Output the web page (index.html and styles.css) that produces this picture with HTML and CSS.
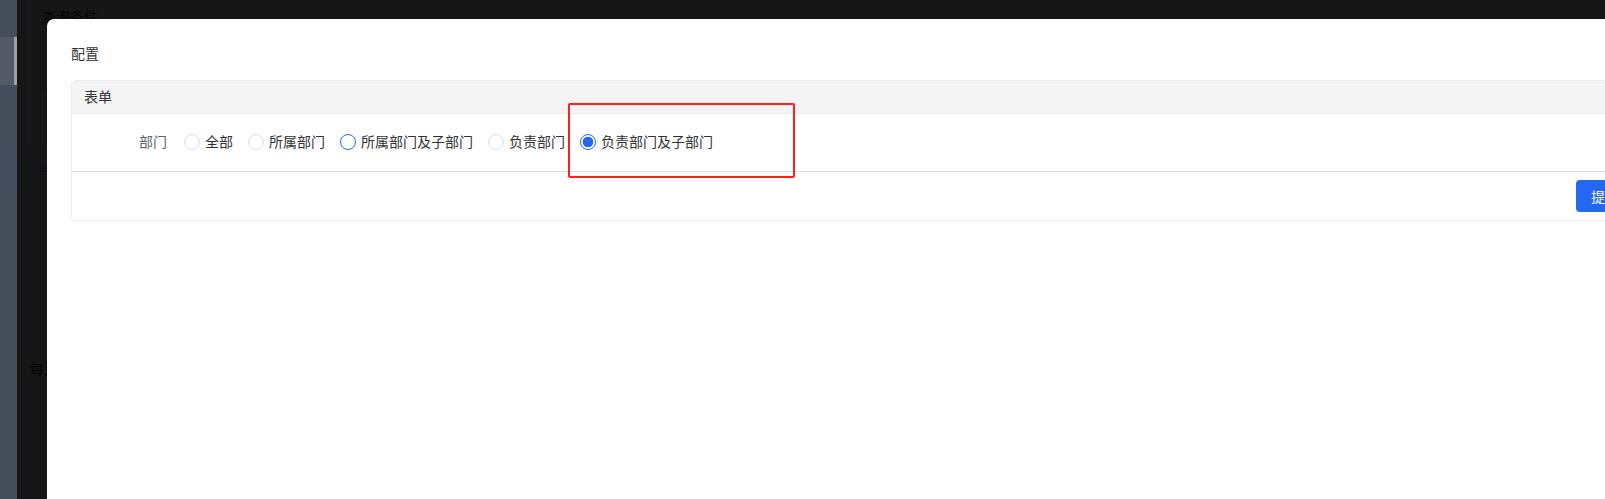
FILE: index.html
```html
<!DOCTYPE html>
<html lang="zh-CN">
<head>
<meta charset="utf-8">
<title>配置</title>
<link rel="stylesheet" href="styles.css">
</head>
<body>
<div class="app">
  <aside class="sidebar">
    <div class="side-top"></div>
    <div class="side-item active"></div>
    <div class="side-rest"></div>
  </aside>
  <main class="main">
    <div class="search-card">
      <div class="search-title">查询条件</div>
      <div class="search-box"></div>
    </div>
    <div class="filter-btn">
      <svg width="12" height="10" viewBox="0 0 12 10"><path d="M1 2h10M3 5h6M5 8h2" stroke="#0e131c" stroke-width="1.6" fill="none"/></svg>
    </div>
    <div class="pager-text">每页</div>
  </main>
</div>

<div class="modal">
  <div class="modal-title">配置</div>
  <div class="card">
    <div class="card-header">表单</div>
    <div class="card-body">
      <div class="form-row">
        <div class="form-label">部门</div>
        <div class="radio-group">
          <label class="radio"><span class="radio-circle"></span><span class="radio-text">全部</span></label>
          <label class="radio"><span class="radio-circle"></span><span class="radio-text">所属部门</span></label>
          <label class="radio"><span class="radio-circle hover"></span><span class="radio-text">所属部门及子部门</span></label>
          <label class="radio"><span class="radio-circle"></span><span class="radio-text">负责部门</span></label>
          <label class="radio"><span class="radio-circle checked"></span><span class="radio-text">负责部门及子部门</span></label>
        </div>
      </div>
    </div>
    <div class="card-footer">
      <button class="btn-primary">提交</button>
    </div>
  </div>
</div>

<div class="highlight"></div>
</body>
</html>
```

FILE: styles.css
```css
html, body {
  margin: 0;
  padding: 0;
  width: 1605px;
  height: 499px;
  overflow: hidden;
  background: #161616;
  font-family: "Noto Sans CJK SC", "Noto Sans", sans-serif;
  font-size: 14px;
}

.app {
  display: flex;
  height: 499px;
}

.sidebar {
  width: 17px;
  display: flex;
  flex-direction: column;
  background: #434d5b;
}

.side-top {
  height: 37px;
}

.side-item.active {
  height: 48px;
  background: #515a66;
  box-shadow: inset -3px 0 0 #9aa1a9;
}

.side-rest {
  flex: 1;
}

.main {
  flex: 1;
  padding: 0 0 0 12px;
  display: flex;
  flex-direction: column;
}

.search-card {
  height: 143px;
  border-left: 1px solid #1c1c1c;
  padding: 6px 0 0 12px;
  box-sizing: border-box;
}

.search-title {
  color: #050505;
  font-size: 14px;
  line-height: 20px;
}

.search-box {
  margin-top: 67px;
  height: 50px;
  border: 1px solid #1b1b1b;
  border-right: none;
}

.filter-btn {
  margin-top: 13px;
  width: 40px;
  height: 30px;
  border: 1px solid #0f1522;
  border-radius: 4px;
  box-sizing: border-box;
  display: flex;
  align-items: center;
  padding-left: 7px;
}

.pager-text {
  margin-top: 172px;
  margin-left: 1px;
  color: #050505;
  line-height: 20px;
}

/* modal */
.modal {
  position: absolute;
  left: 47px;
  top: 19px;
  width: 1624px;
  height: 480px;
  background: #ffffff;
  border-radius: 7px 7px 0 0;
  padding: 23px 24px 0;
  box-sizing: border-box;
}

.modal-title {
  color: #333333;
  font-size: 14px;
  line-height: 22px;
  margin-bottom: 16px;
}

.card {
  border: 1px solid #ebedf3;
  border-radius: 4px;
}

.card-header {
  height: 32px;
  line-height: 30px;
  padding: 0 12px 2px;
  box-sizing: border-box;
  background: #f4f4f5;
  border-bottom: 1px solid #ebedf3;
  color: #333333;
}

.card-header {
  height: 33px;
}

.card-body {
  padding: 16px 12px 17px;
}

.form-row {
  display: flex;
  align-items: center;
  height: 24px;
}

.form-label {
  width: 83px;
  text-align: right;
  color: #606266;
  margin-right: 17px;
  margin-bottom: 2px;
}

.radio-group {
  display: flex;
  align-items: center;
  gap: 15px;
}

.radio {
  display: flex;
  align-items: center;
  color: #303133;
}

.radio-text {
  margin-bottom: 2px;
}

.radio-circle {
  width: 16px;
  height: 16px;
  box-sizing: border-box;
  border: 1px solid #dcdfe6;
  border-radius: 50%;
  margin-right: 5px;
  background: #fff;
}

.radio-circle.hover {
  border-color: #2468f2;
}

.radio-circle.checked {
  border: 1px solid #2468f2;
  background: radial-gradient(circle, #2468f2 0 5px, #ffffff 5.6px);
}

.card-footer {
  border-top: 1px solid #dedede;
  padding: 8px 12px;
  display: flex;
  justify-content: flex-end;
}

.btn-primary {
  height: 32px;
  padding: 0 15px;
  background: #2468f2;
  color: #ffffff;
  border: none;
  border-radius: 4px;
  font-family: "Noto Sans CJK SC", sans-serif;
  font-size: 14px;
}

.highlight {
  position: absolute;
  left: 568px;
  top: 103px;
  width: 227px;
  height: 75px;
  box-sizing: border-box;
  border: 2px solid #ff1f1f;
  border-radius: 2px;
}
```
